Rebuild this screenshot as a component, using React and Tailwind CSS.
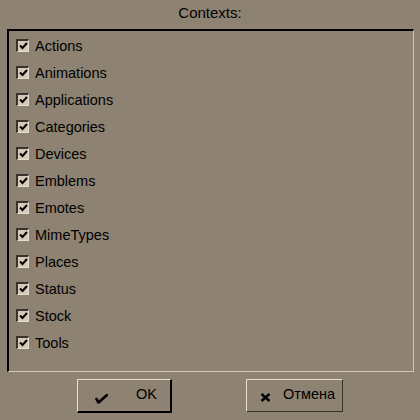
import React from "react";

const items = ["Actions","Animations","Applications","Categories","Devices","Emblems","Emotes","MimeTypes","Places","Status","Stock","Tools"];

function Check() {
  return (
    <div className="w-[13px] h-[13px] border-t-2 border-l-2 border-t-[#3a332b] border-l-[#3a332b] border-b border-r border-b-[#e8dccc] border-r-[#e8dccc] bg-[#d6cabb] flex items-center justify-center">
      <svg width="9" height="8" viewBox="0 0 9 8">
        <path d="M1 3.5 L3.5 6 L8 1" stroke="#000" strokeWidth="2" fill="none" />
      </svg>
    </div>
  );
}

export default function App() {
  return (
    <div className="w-[420px] h-[420px] bg-[#8e8272] flex flex-col font-['Liberation_Sans',Arial,sans-serif] text-[14px] text-black">
      <div className="h-[29px] flex items-start justify-center pt-[5px] leading-[16px] text-[15px]">Contexts:</div>
      <div className="ml-[7px] w-[407px] h-[343px] border-t-2 border-l-2 border-t-black border-l-black border-b border-r border-b-[#d2c6b6] border-r-[#d2c6b6] flex flex-col pt-[1px] pl-[7px]">
        {items.map((t) => (
          <div key={t} className="h-[27px] flex items-center gap-[6px]">
            <Check />
            <span className="leading-[16px] text-[14.5px]">{t}</span>
          </div>
        ))}
      </div>
      <div className="flex pt-[7px]">
        <button className="ml-[77px] w-[95px] h-[34px] border-t border-l border-t-[#eadfcf] border-l-[#eadfcf] border-b-2 border-r-2 border-b-black border-r-black flex items-center">
          <svg className="ml-[17px] mt-[6px]" width="13" height="10" viewBox="0 0 13 10">
            <path d="M1.5 5 L3.5 8.5 L12 1" stroke="#000" strokeWidth="2.6" fill="none" strokeLinejoin="round" strokeLinecap="round" />
          </svg>
          <span className="ml-[28px] mb-[4px] leading-[16px] text-[14.5px]">OK</span>
        </button>
        <button className="ml-[74px] w-[97px] h-[33px] border-t border-l border-t-[#eadfcf] border-l-[#eadfcf] border-b border-r border-b-[#3a332b] border-r-[#3a332b] flex items-center">
          <svg className="ml-[13px] mt-[3px]" width="11" height="9" viewBox="0 0 11 9">
            <path d="M1.5 1 L9.5 8 M9.5 1 L1.5 8" stroke="#000" strokeWidth="2.4" fill="none" />
          </svg>
          <span className="ml-[12px] mb-[4px] leading-[16px] text-[14.5px]">Отмена</span>
        </button>
      </div>
    </div>
  );
}
